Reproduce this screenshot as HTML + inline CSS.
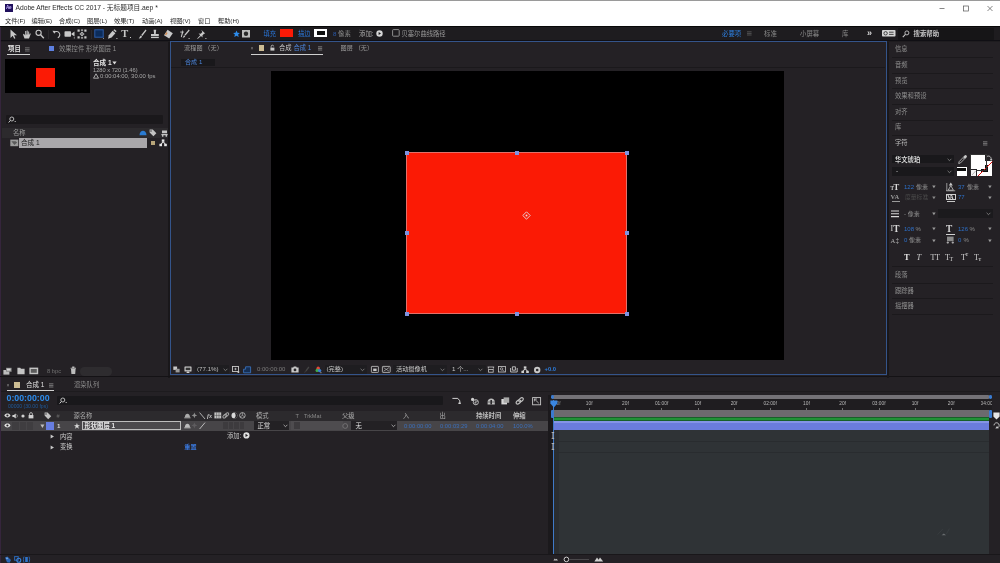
<!DOCTYPE html>
<html lang="zh-CN"><head><meta charset="utf-8"><title>Adobe After Effects CC 2017 - 无标题项目.aep *</title>
<style>
html,body{margin:0;padding:0;}
body{width:1000px;height:563px;overflow:hidden;position:relative;background:#242125;font-family:"Liberation Sans","Noto Sans CJK SC",sans-serif;-webkit-font-smoothing:antialiased;}
#app{position:absolute;left:-20px;top:-20px;width:1040px;height:603px;overflow:hidden;background:#242125;filter:blur(0.5px);}
#in{position:absolute;left:20px;top:20px;width:1000px;height:563px;}
.a{position:absolute;display:block;}
.t{position:absolute;display:block;white-space:nowrap;line-height:10px;height:10px;}
svg{overflow:visible;}
</style></head>
<body>
<div id="app"><div id="in">
<div class="a" style="left:-20px;top:-20px;width:1040px;height:46.5px;background:#ffffff;"></div>
<div class="a" style="left:-20px;top:-20px;width:1040px;height:20.8px;background:#9a9a9a;"></div>
<div class="a" style="left:5px;top:4px;width:7.5px;height:7.5px;background:#1f0f5c;"></div>
<span class="t" style="left:5.9px;top:2.9px;font-size:4.6px;color:#c9b8ff;font-weight:bold;letter-spacing:-0.2px">Ae</span>
<span class="t" style="left:15.5px;top:3.2px;font-size:6.7px;color:#2a2a2a;">Adobe After Effects CC 2017 - 无标题项目.aep *</span>
<svg class="a" style="left:938px;top:4px;" width="60" height="9" viewBox="0 0 60 9"><path d="M1.5 4.5h5" stroke="#555" stroke-width="0.7" fill="none"/><rect x="25.5" y="2" width="5" height="5" stroke="#555" stroke-width="0.7" fill="none"/><path d="M49.5 2l5 5M54.5 2l-5 5" stroke="#555" stroke-width="0.7" fill="none"/></svg>
<span class="t" style="left:5px;top:16px;font-size:6.2px;color:#2a2a2a;">文件(F)</span>
<span class="t" style="left:31.5px;top:16px;font-size:6.2px;color:#2a2a2a;">编辑(E)</span>
<span class="t" style="left:59px;top:16px;font-size:6.2px;color:#2a2a2a;">合成(C)</span>
<span class="t" style="left:87px;top:16px;font-size:6.2px;color:#2a2a2a;">图层(L)</span>
<span class="t" style="left:114px;top:16px;font-size:6.2px;color:#2a2a2a;">效果(T)</span>
<span class="t" style="left:142px;top:16px;font-size:6.2px;color:#2a2a2a;">动画(A)</span>
<span class="t" style="left:170px;top:16px;font-size:6.2px;color:#2a2a2a;">视图(V)</span>
<span class="t" style="left:198px;top:16px;font-size:6.2px;color:#2a2a2a;">窗口</span>
<span class="t" style="left:218px;top:16px;font-size:6.2px;color:#2a2a2a;">帮助(H)</span>
<div class="a" style="left:-20px;top:26.5px;width:1040px;height:15px;background:#1e1c1f;"></div>
<div class="a" style="left:-20px;top:26.4px;width:1040px;height:1px;background:#080808;"></div>
<div class="a" style="left:-20px;top:39.8px;width:1040px;height:1.2px;background:#100f14;"></div>
<svg class="a" style="left:9px;top:28.5px;" width="9" height="11" viewBox="0 0 9 11"><path d="M1.5 0.5v8.5l2.2-2.2 1.5 3 1.2-0.6-1.4-2.9h3z" fill="#c8c8c8"/></svg>
<svg class="a" style="left:20.5px;top:28.5px;" width="11" height="11" viewBox="0 0 11 11"><path d="M2 5.5l1.5 4h4.5l1.8-4.8-0.9-0.4-0.8 1.7v-3.6h-0.9v3h-0.5v-4h-1v4h-0.5v-3.4h-1v4.6l-1.3-1.8z" fill="#c8c8c8"/></svg>
<svg class="a" style="left:34.5px;top:28.5px;" width="10" height="11" viewBox="0 0 10 11"><circle cx="3.6" cy="3.8" r="2.6" stroke="#c8c8c8" stroke-width="1.1" fill="none"/><path d="M5.6 5.8l3.2 3.4" stroke="#c8c8c8" stroke-width="1.4"/></svg>
<svg class="a" style="left:51.5px;top:28.5px;" width="10" height="11" viewBox="0 0 10 11"><path d="M2.2 3.4a3.3 3.3 0 1 1 3.6 5.4" stroke="#c8c8c8" stroke-width="1.1" fill="none"/><path d="M0.5 1.8l3.2 0.2-1.4 2.8z" fill="#c8c8c8"/></svg>
<svg class="a" style="left:63.5px;top:29.5px;" width="12" height="9" viewBox="0 0 12 9"><rect x="0.5" y="1.2" width="6.5" height="5.6" rx="0.8" fill="#c8c8c8"/><path d="M7 4l3.5-2.5v5z" fill="#c8c8c8"/><rect x="9.8" y="7.4" width="1" height="1" fill="#c8c8c8"/></svg>
<svg class="a" style="left:77px;top:29px;" width="10" height="10" viewBox="0 0 10 10"><g fill="#c8c8c8"><rect x="0.5" y="0.5" width="2.2" height="2.2"/><rect x="3.9" y="0.5" width="2.2" height="1.2"/><rect x="7.3" y="0.5" width="2.2" height="2.2"/><rect x="0.5" y="7.3" width="2.2" height="2.2"/><rect x="7.3" y="7.3" width="2.2" height="2.2"/><rect x="3.9" y="8.3" width="2.2" height="1.2"/><path d="M5 2.6l1.5 1.6h-1v1.6h1l-1.5 1.6-1.5-1.6h1v-1.6h-1z"/><path d="M2.4 5l1.4-1.3v2.6zM7.6 5l-1.4-1.3v2.6z"/></g></svg>
<svg class="a" style="left:93.5px;top:28.5px;" width="11" height="11" viewBox="0 0 11 11"><rect x="0.8" y="0.8" width="8.4" height="7.4" fill="#0c2c5a" stroke="#2b5ca8" stroke-width="1"/><rect x="9" y="9" width="1" height="1" fill="#8a8a8a"/></svg>
<svg class="a" style="left:106.5px;top:28.5px;" width="11" height="11" viewBox="0 0 11 11"><path d="M1 9.8l0.8-3.6 3.8-4.4 2.8 2.4-3.8 4.4z" fill="#c8c8c8"/><path d="M6.4 1.2l1-1 2.2 1.9-0.9 1.1z" fill="#c8c8c8"/><rect x="9.4" y="9" width="1" height="1" fill="#c8c8c8"/></svg>
<span class="t" style="left:121.3px;top:28.8px;font-size:10.5px;color:#c8c8c8;font-family:'Liberation Serif',serif;font-weight:bold;">T</span>
<div class="a" style="left:130px;top:37.3px;width:1px;height:1px;background:#c8c8c8;"></div>
<svg class="a" style="left:137.5px;top:28.5px;" width="9" height="11" viewBox="0 0 9 11"><path d="M7.6 0.6l0.9 0.8-4.2 5.6-1.1-0.9z" fill="#c8c8c8"/><path d="M2.9 6.6l1.1 0.9c-0.3 1.4-1.5 2-3.2 1.9 0.9-0.6 0.9-2 2.1-2.8z" fill="#c8c8c8"/></svg>
<svg class="a" style="left:149.5px;top:28.5px;" width="10" height="11" viewBox="0 0 10 11"><path d="M3.6 0.8h2.6l-0.5 4.2h3.1v2.2h-7.8v-2.2h3.1z" fill="#c8c8c8"/><rect x="1" y="8" width="7.8" height="1.1" fill="#c8c8c8"/></svg>
<svg class="a" style="left:162.5px;top:28.5px;" width="11" height="11" viewBox="0 0 11 11"><path d="M4.6 0.8l5.2 3.4-3.6 5.4-5.2-3.4z" fill="#c8c8c8"/><path d="M1.9 5.4l1.5-2.3 1.2 0.8-1.5 2.3z" fill="#d08a50"/></svg>
<svg class="a" style="left:179.5px;top:28.5px;" width="11" height="11" viewBox="0 0 11 11"><path d="M8.8 0.6l0.9 0.8-4.2 5.2-1.1-0.9z" fill="#c8c8c8"/><path d="M4.1 6.2l1.1 0.9c-0.3 1.2-1.2 1.8-2.6 1.7 0.6-0.6 0.6-1.8 1.5-2.6z" fill="#c8c8c8"/><path d="M2.2 0.6l0.9 3.2-1.4 4.4-0.9-0.2 1-4.2z" fill="#c8c8c8"/><rect x="0.2" y="2.6" width="3.6" height="0.9" fill="#c8c8c8"/><rect x="8.6" y="9" width="1" height="1" fill="#c8c8c8"/></svg>
<svg class="a" style="left:195.5px;top:28.5px;" width="11" height="11" viewBox="0 0 11 11"><path d="M5.2 0.8l4 3.6-1.2 0.4-1.6 1.6 0.2 2-1.6-1.4-3.4 3-0.4-0.4 3-3.4-1.6-1.6 2.2 0.1 1.6-1.6z" fill="#c8c8c8"/><rect x="9.4" y="9" width="1" height="1" fill="#c8c8c8"/></svg>
<div class="a" style="left:48px;top:29.5px;width:0.6px;height:9px;background:#2c2a2d;"></div>
<div class="a" style="left:90.5px;top:29.5px;width:0.6px;height:9px;background:#2c2a2d;"></div>
<svg class="a" style="left:232.5px;top:29.5px;" width="7" height="8" viewBox="0 0 7 8"><path d="M3.5 0.4l1 2.3 2.4 0.2-1.8 1.7 0.6 2.5-2.2-1.4-2.2 1.4 0.6-2.5-1.8-1.7 2.4-0.2z" fill="#2d8ceb"/></svg>
<svg class="a" style="left:242px;top:29.8px;" width="8" height="7.5" viewBox="0 0 8 7.5"><rect x="0" y="0" width="8" height="7.5" fill="#bdbdbd"/><circle cx="4" cy="3.75" r="2.2" fill="#2a2a2a"/></svg>
<span class="t" style="left:263.5px;top:28.5px;font-size:6.3px;color:#2a74d4;">填充</span>
<div class="a" style="left:279.5px;top:28.8px;width:13px;height:8.7px;background:#fc1a06;"></div>
<span class="t" style="left:298px;top:28.5px;font-size:6.3px;color:#2a74d4;">描边</span>
<div class="a" style="left:314px;top:28.8px;width:13.2px;height:8.7px;background:#ffffff;"></div>
<div class="a" style="left:316.6px;top:31.2px;width:8px;height:3.8px;background:#111;"></div>
<span class="t" style="left:333px;top:28.5px;font-size:6.2px;color:#2a5cae;">8</span>
<span class="t" style="left:338px;top:28.5px;font-size:6.4px;color:#8c8c8c;">像素</span>
<span class="t" style="left:359px;top:28.5px;font-size:6.4px;color:#a8a8a8;">添加:</span>
<svg class="a" style="left:375.5px;top:30px;" width="7" height="7" viewBox="0 0 7 7"><circle cx="3.5" cy="3.5" r="3.2" fill="#d6d6d6"/><path d="M2.6 1.9l2.4 1.6-2.4 1.6z" fill="#1d1b1e"/></svg>
<svg class="a" style="left:391.5px;top:29.3px;" width="8" height="8" viewBox="0 0 8 8"><rect x="0.6" y="0.6" width="6.6" height="6.6" rx="0.8" fill="none" stroke="#9a9a9a" stroke-width="0.9"/></svg>
<span class="t" style="left:401.5px;top:28.5px;font-size:6.3px;color:#9a9a9a;">贝塞尔曲线路径</span>
<span class="t" style="left:722px;top:28.8px;font-size:6.4px;color:#2d7fe0;">必要项</span>
<svg class="a" style="left:746.5px;top:31.3px;" width="5" height="5" viewBox="0 0 5 5"><path d="M0 0.8h4.6M0 2.4h4.6M0 4h4.6" stroke="#666" stroke-width="0.7"/></svg>
<span class="t" style="left:764px;top:28.8px;font-size:6.4px;color:#8a8a8a;">标准</span>
<span class="t" style="left:800px;top:28.8px;font-size:6.4px;color:#8a8a8a;">小屏幕</span>
<span class="t" style="left:842px;top:28.8px;font-size:6.4px;color:#8a8a8a;">库</span>
<span class="t" style="left:867px;top:27.8px;font-size:9px;color:#d8d8d8;font-weight:bold">»</span>
<svg class="a" style="left:882px;top:30.3px;" width="14" height="7" viewBox="0 0 14 7"><rect x="0" y="0" width="13.5" height="6.6" rx="0.8" fill="#d4d4d4"/><circle cx="3.6" cy="3.3" r="1.7" fill="none" stroke="#222" stroke-width="0.8"/><path d="M7 2.2h4.6M7 4.4h4.6" stroke="#222" stroke-width="0.8"/></svg>
<div class="a" style="left:898px;top:28px;width:96px;height:11.5px;background:#161517;border-radius:1px"></div>
<svg class="a" style="left:901.5px;top:30px;" width="8" height="8" viewBox="0 0 8 8"><circle cx="4.9" cy="2.9" r="2" fill="none" stroke="#c8c8c8" stroke-width="0.9"/><path d="M3.4 4.4l-2.6 2.8" stroke="#c8c8c8" stroke-width="1.1"/></svg>
<span class="t" style="left:913.5px;top:28.8px;font-size:6.4px;color:#c4c4c4;font-weight:bold">搜索帮助</span>
<div class="a" style="left:-20px;top:26.5px;width:21.2px;height:557px;background:#35253c;"></div>
<span class="t" style="left:8px;top:43.6px;font-size:6.4px;color:#e0e0e0;font-weight:bold">项目</span>
<svg class="a" style="left:25px;top:46.8px;" width="5" height="5" viewBox="0 0 5 5"><path d="M0 0.8h4.6M0 2.4h4.6M0 4h4.6" stroke="#8a8a8a" stroke-width="0.7"/></svg>
<div class="a" style="left:7px;top:54.4px;width:23px;height:1px;background:#d0d0d0;"></div>
<div class="a" style="left:48.5px;top:45.8px;width:5px;height:5.6px;background:#5d80e0;"></div>
<span class="t" style="left:59px;top:43.8px;font-size:6.3px;color:#8e8e8e;">效果控件 形状图层 1</span>
<div class="a" style="left:4.6px;top:59.2px;width:85px;height:33.6px;background:#000;"></div>
<div class="a" style="left:36px;top:68.4px;width:18.5px;height:18.8px;background:#fb1a05;"></div>
<span class="t" style="left:93px;top:57.6px;font-size:6.6px;color:#e6e6e6;font-weight:bold">合成 1</span>
<svg class="a" style="left:111.5px;top:61px;" width="5" height="4" viewBox="0 0 5 4"><path d="M0.4 0.6h4.2l-2.1 2.8z" fill="#dcdcdc"/></svg>
<span class="t" style="left:93px;top:64.6px;font-size:5.7px;color:#a8a8a8;">1280 x 720 (1.46)</span>
<svg class="a" style="left:93px;top:73.3px;" width="6" height="6" viewBox="0 0 6 6"><path d="M3 0.8l2.5 4.4h-5z" fill="none" stroke="#c8c8c8" stroke-width="0.8"/></svg>
<span class="t" style="left:100px;top:71.4px;font-size:5.9px;color:#a8a8a8;">0:00:04:00, 30.00 fps</span>
<div class="a" style="left:5.5px;top:115.3px;width:157.5px;height:8.5px;background:#1a181b;border-radius:1px"></div>
<svg class="a" style="left:7.5px;top:116px;" width="10" height="8" viewBox="0 0 10 8"><circle cx="3.8" cy="3" r="2" fill="none" stroke="#c8c8c8" stroke-width="0.9"/><path d="M2.4 4.5l-1.8 2" stroke="#c8c8c8" stroke-width="1"/><rect x="6.6" y="5" width="1.2" height="0.9" fill="#c8c8c8"/></svg>
<div class="a" style="left:2px;top:128px;width:166px;height:9.6px;background:#2c2a2d;"></div>
<span class="t" style="left:13px;top:128px;font-size:6.3px;color:#a0a0a0;">名称</span>
<svg class="a" style="left:138.5px;top:129.5px;" width="8" height="6" viewBox="0 0 8 6"><path d="M0.5 5.2c0-3 2-4.4 3.5-4.4s3.5 1.4 3.5 4.4z" fill="#2a7bd2"/></svg>
<svg class="a" style="left:149px;top:128.8px;" width="8" height="8" viewBox="0 0 8 8"><path d="M0.6 0.6h3.2l3.6 3.6-3 3-3.8-3.8z" fill="#c4c4c4"/><circle cx="2" cy="2" r="0.7" fill="#2c2a2d"/></svg>
<svg class="a" style="left:160.5px;top:129.5px;" width="7" height="7" viewBox="0 0 7 7"><path d="M1 0.6h5v2.6h-5zM0.4 4h6.2v1.2h-6.2zM1 5.2h1.4v1.6h-1.4zM4.6 5.2h1.4v1.6h-1.4z" fill="#c4c4c4"/></svg>
<svg class="a" style="left:9.5px;top:138.8px;" width="9" height="8" viewBox="0 0 9 8"><rect x="0.3" y="0.6" width="8" height="6.6" fill="#9c9c9c"/><path d="M1.4 2.2h4.2l1.6 1.2-2.8 2.6z" fill="#5a5a5a"/></svg>
<div class="a" style="left:19px;top:138.2px;width:128px;height:9.4px;background:#a9a7aa;"></div>
<span class="t" style="left:21px;top:138px;font-size:6.6px;color:#1a1a1a;">合成 1</span>
<div class="a" style="left:150.8px;top:140.6px;width:4.6px;height:4.8px;background:#b8a67a;"></div>
<svg class="a" style="left:158.5px;top:138.8px;" width="9" height="8" viewBox="0 0 9 8"><g fill="#e8e8e8"><rect x="2.8" y="0.4" width="2.6" height="2.4"/><rect x="0.4" y="4.8" width="2.6" height="2.4"/><rect x="5.2" y="4.8" width="2.6" height="2.4"/><path d="M3.8 2.6l-2.4 2.6h1.2l1.6-1.6 1.6 1.6h1.2l-2.4-2.6z"/></g></svg>
<svg class="a" style="left:3px;top:366.5px;" width="9" height="9" viewBox="0 0 9 9"><rect x="0.4" y="3" width="6" height="4.6" fill="#bdbdbd"/><rect x="3" y="0.8" width="5.6" height="4" fill="#8c8c8c"/><rect x="4" y="1.6" width="3.6" height="2" fill="#d8d8d8"/></svg>
<svg class="a" style="left:16.5px;top:366.8px;" width="8" height="8" viewBox="0 0 8 8"><path d="M0.4 0.8h2.8l0.8 1h3.6v5.4h-7.2z" fill="#c4c4c4"/></svg>
<svg class="a" style="left:29px;top:366.8px;" width="10" height="8" viewBox="0 0 10 8"><rect x="0.4" y="0.6" width="8.8" height="6.6" fill="#c4c4c4"/><rect x="1.8" y="2" width="6" height="3.8" fill="#5c5c5c"/></svg>
<span class="t" style="left:47px;top:366.3px;font-size:5.8px;color:#6f6f6f;">8 bpc</span>
<svg class="a" style="left:69.5px;top:366.3px;" width="7" height="9" viewBox="0 0 7 9"><path d="M0.6 1.8h5.4v0.9h-5.4zM2.2 0.6h2.2v1.2h-2.2zM1 3.1h4.6l-0.4 5h-3.8z" fill="#bcbcbc"/></svg>
<div class="a" style="left:80px;top:367px;width:31.5px;height:8.5px;background:#2e2c2f;border-radius:4.2px"></div>
<div class="a" style="left:168px;top:42px;width:2px;height:336px;background:#19171a;"></div>
<div class="a" style="left:0px;top:376.3px;width:1000px;height:1.2px;background:#141215;"></div>
<div class="a" style="left:886.6px;top:42px;width:2.2px;height:336px;background:#19171a;"></div>
<div class="a" style="left:169.5px;top:41.4px;width:715.2px;height:331.7px;border:1.3px solid #34548a;"></div>
<span class="t" style="left:184px;top:43.2px;font-size:6.1px;color:#9a9a9a;letter-spacing:0.1px">流程图 （无）</span>
<span class="t" style="left:250.5px;top:43.2px;font-size:5px;color:#8a8a8a;">×</span>
<div class="a" style="left:259px;top:45.4px;width:5.2px;height:5.4px;background:#cdbd94;"></div>
<svg class="a" style="left:269.5px;top:45px;" width="5" height="6" viewBox="0 0 5 6"><rect x="0.4" y="2.6" width="4" height="3" fill="#c8c8c8"/><path d="M1.2 2.6v-1.2a1.2 1.2 0 0 1 2.4 0" fill="none" stroke="#c8c8c8" stroke-width="0.8"/></svg>
<span class="t" style="left:279px;top:43.2px;font-size:6.3px;color:#c8c8c8;">合成</span>
<span class="t" style="left:293.5px;top:43.2px;font-size:6.3px;color:#4d86dc;">合成 1</span>
<svg class="a" style="left:317.5px;top:46.2px;" width="5" height="5" viewBox="0 0 5 5"><path d="M0 0.8h4.2M0 2.4h4.2M0 4h4.2" stroke="#9a9a9a" stroke-width="0.7"/></svg>
<div class="a" style="left:251px;top:54.2px;width:72px;height:1px;background:#d0d0d0;"></div>
<span class="t" style="left:340.5px;top:43.2px;font-size:6.1px;color:#9a9a9a;letter-spacing:0.1px">图层 （无）</span>
<div class="a" style="left:181px;top:58.6px;width:34px;height:7.6px;background:#19181b;"></div>
<span class="t" style="left:185px;top:57.4px;font-size:6.1px;color:#4d86dc;">合成 1</span>
<div class="a" style="left:171px;top:67.2px;width:714px;height:0.8px;background:#1b191c;"></div>
<div class="a" style="left:271px;top:70.7px;width:513px;height:289px;background:#000;"></div>
<div class="a" style="left:406.3px;top:152.3px;width:221.2px;height:162px;background:#fb1a05;"></div>
<div class="a" style="left:406.3px;top:152.3px;width:221.2px;height:162px;border:1px solid #e2706a;box-sizing:border-box;"></div>
<div class="a" style="left:404.6px;top:151px;width:4px;height:4px;background:#7d92e0;"></div>
<div class="a" style="left:404.6px;top:231.3px;width:4px;height:4px;background:#7d92e0;"></div>
<div class="a" style="left:404.6px;top:311.8px;width:4px;height:4px;background:#7d92e0;"></div>
<div class="a" style="left:514.8px;top:151px;width:4px;height:4px;background:#7d92e0;"></div>
<div class="a" style="left:514.8px;top:311.8px;width:4px;height:4px;background:#7d92e0;"></div>
<div class="a" style="left:625px;top:151px;width:4px;height:4px;background:#7d92e0;"></div>
<div class="a" style="left:625px;top:231.3px;width:4px;height:4px;background:#7d92e0;"></div>
<div class="a" style="left:625px;top:311.8px;width:4px;height:4px;background:#7d92e0;"></div>
<svg class="a" style="left:522.4px;top:211.3px;" width="9" height="9" viewBox="0 0 9 9"><path d="M4.5 0.8l3.7 3.7-3.7 3.7-3.7-3.7z" fill="none" stroke="#e8c4cc" stroke-width="1"/><circle cx="4.5" cy="4.5" r="1" fill="#f0d8dc"/></svg>
<svg class="a" style="left:173px;top:366px;" width="7" height="7" viewBox="0 0 7 7"><rect x="0.3" y="0.5" width="3.8" height="3.4" fill="#c8c8c8"/><rect x="2.6" y="2.8" width="4" height="3.6" fill="#9a9a9a"/></svg>
<svg class="a" style="left:184px;top:365.8px;" width="8" height="8" viewBox="0 0 8 8"><rect x="0.5" y="0.6" width="7" height="4.8" rx="0.5" fill="#d0d0d0"/><rect x="1.6" y="1.6" width="4.8" height="2.6" fill="#333"/><rect x="2.6" y="6" width="2.8" height="1" fill="#d0d0d0"/><rect x="3.5" y="5.2" width="1" height="1" fill="#d0d0d0"/></svg>
<div class="a" style="left:195px;top:364.6px;width:34px;height:9px;background:#1e1d20;border-radius:1px"></div>
<div class="a" style="left:325px;top:364.6px;width:42px;height:9px;background:#1e1d20;border-radius:1px"></div>
<div class="a" style="left:393px;top:364.6px;width:54px;height:9px;background:#1e1d20;border-radius:1px"></div>
<div class="a" style="left:449.5px;top:364.6px;width:36px;height:9px;background:#1e1d20;border-radius:1px"></div>
<span class="t" style="left:197px;top:364.2px;font-size:6.2px;color:#bdbdbd;">(77.1%)</span>
<svg class="a" style="left:222.5px;top:367.8px;" width="5" height="4" viewBox="0 0 5 4"><path d="M0.6 0.8l1.9 1.9 1.9-1.9" fill="none" stroke="#8a8a8a" stroke-width="0.8"/></svg>
<svg class="a" style="left:232px;top:365.5px;" width="8" height="8" viewBox="0 0 8 8"><rect x="0.5" y="0.5" width="6" height="5" fill="none" stroke="#c8c8c8" stroke-width="0.9"/><path d="M3.5 1.8v2.4M2.3 3h2.4" stroke="#c8c8c8" stroke-width="0.7"/><rect x="5.6" y="5" width="1.6" height="2" fill="#c8c8c8"/></svg>
<svg class="a" style="left:243px;top:365.5px;" width="9" height="8" viewBox="0 0 9 8"><path d="M0.6 6.8v-3.6h2v-2.4h5v6z" fill="#152f55" stroke="#3c78c8" stroke-width="0.8"/></svg>
<span class="t" style="left:257px;top:364.2px;font-size:6px;color:#7c7c7c;">0:00:00:00</span>
<svg class="a" style="left:291px;top:366px;" width="8" height="7" viewBox="0 0 8 7"><path d="M0.4 1.6h1.8l0.6-1h2.4l0.6 1h1.8v4.8h-7.2z" fill="#c8c8c8"/><circle cx="4" cy="3.9" r="1.4" fill="#2a282b"/></svg>
<svg class="a" style="left:303px;top:366px;" width="7" height="7" viewBox="0 0 7 7"><path d="M5.4 0.6l1 0.8-3 4-1-0.8z" fill="#444"/><path d="M2 5l1 0.8-1.8 1.2z" fill="#444"/></svg>
<svg class="a" style="left:315px;top:365.5px;" width="8" height="8" viewBox="0 0 8 8"><circle cx="3.2" cy="2.3" r="1.7" fill="#e04a3a"/><circle cx="2.2" cy="4.4" r="1.7" fill="#3fae49"/><circle cx="4.6" cy="4.6" r="1.7" fill="#3b7fd6"/><rect x="5.4" y="6.2" width="1" height="1" fill="#bbb"/></svg>
<span class="t" style="left:326.5px;top:364.2px;font-size:6.2px;color:#c0c0c0;">(完整)</span>
<svg class="a" style="left:360px;top:367.8px;" width="5" height="4" viewBox="0 0 5 4"><path d="M0.6 0.8l1.9 1.9 1.9-1.9" fill="none" stroke="#8a8a8a" stroke-width="0.8"/></svg>
<svg class="a" style="left:371px;top:365.8px;" width="8" height="7" viewBox="0 0 8 7"><rect x="0.4" y="0.4" width="7" height="6" rx="0.6" fill="none" stroke="#c8c8c8" stroke-width="0.8"/><rect x="2.2" y="2.6" width="3.4" height="2.4" fill="#c8c8c8"/></svg>
<svg class="a" style="left:382px;top:365.8px;" width="9" height="7" viewBox="0 0 9 7"><rect x="0.4" y="0.4" width="7.8" height="6" rx="0.6" fill="none" stroke="#c8c8c8" stroke-width="0.8"/><path d="M1.6 1.6l5.4 3.6M7 1.6l-5.4 3.6" stroke="#c8c8c8" stroke-width="0.6"/></svg>
<span class="t" style="left:396px;top:364.2px;font-size:6.2px;color:#c8c8c8;">活动摄像机</span>
<svg class="a" style="left:439.5px;top:367.8px;" width="5" height="4" viewBox="0 0 5 4"><path d="M0.6 0.8l1.9 1.9 1.9-1.9" fill="none" stroke="#8a8a8a" stroke-width="0.8"/></svg>
<span class="t" style="left:452px;top:364.2px;font-size:6.2px;color:#c8c8c8;">1 个...</span>
<svg class="a" style="left:477.5px;top:367.8px;" width="5" height="4" viewBox="0 0 5 4"><path d="M0.6 0.8l1.9 1.9 1.9-1.9" fill="none" stroke="#8a8a8a" stroke-width="0.8"/></svg>
<svg class="a" style="left:486.5px;top:365.8px;" width="8" height="7" viewBox="0 0 8 7"><path d="M0.6 1h6.6M1.4 1v1.6M6.4 1v1.6" stroke="#c8c8c8" stroke-width="0.8" fill="none"/><rect x="1.6" y="3.4" width="4.6" height="2.8" fill="none" stroke="#c8c8c8" stroke-width="0.8"/></svg>
<svg class="a" style="left:498px;top:365.8px;" width="8" height="7" viewBox="0 0 8 7"><rect x="0.4" y="0.4" width="7" height="5.6" fill="none" stroke="#c8c8c8" stroke-width="0.8"/><circle cx="3.6" cy="2.9" r="1.2" fill="none" stroke="#c8c8c8" stroke-width="0.7"/><path d="M4.6 3.9l1.6 1.6" stroke="#c8c8c8" stroke-width="0.7"/></svg>
<svg class="a" style="left:509.5px;top:365.8px;" width="8" height="7" viewBox="0 0 8 7"><path d="M0.6 2v4h6.6v-4M2.4 0.8h3v3.4h-3z" fill="none" stroke="#c8c8c8" stroke-width="0.9"/></svg>
<svg class="a" style="left:521px;top:365.5px;" width="9" height="8" viewBox="0 0 9 8"><g fill="#d0d0d0"><rect x="2.8" y="0.4" width="2.6" height="2.2"/><rect x="0.4" y="4.8" width="2.6" height="2.2"/><rect x="5.2" y="4.8" width="2.6" height="2.2"/><path d="M3.8 2.4l-2.4 2.6h1.2l1.6-1.6 1.6 1.6h1.2l-2.4-2.6z"/></g></svg>
<svg class="a" style="left:533px;top:365.5px;" width="9" height="8" viewBox="0 0 9 8"><circle cx="4.2" cy="4" r="3.2" fill="#c8c8c8"/><circle cx="4.2" cy="4" r="1.3" fill="#2a282b"/></svg>
<span class="t" style="left:544.6px;top:364.2px;font-size:5.8px;color:#2d7fe0;font-weight:bold">+0.0</span>
<span class="t" style="left:895px;top:44.4px;font-size:6.3px;color:#8f8f8f;">信息</span>
<div class="a" style="left:892px;top:57.199999999999996px;width:101px;height:0.7px;background:#1b191c;"></div>
<span class="t" style="left:895px;top:60px;font-size:6.3px;color:#8f8f8f;">音频</span>
<div class="a" style="left:892px;top:72.8px;width:101px;height:0.7px;background:#1b191c;"></div>
<span class="t" style="left:895px;top:75.6px;font-size:6.3px;color:#8f8f8f;">预览</span>
<div class="a" style="left:892px;top:88.39999999999999px;width:101px;height:0.7px;background:#1b191c;"></div>
<span class="t" style="left:895px;top:91.2px;font-size:6.3px;color:#8f8f8f;">效果和预设</span>
<div class="a" style="left:892px;top:104.0px;width:101px;height:0.7px;background:#1b191c;"></div>
<span class="t" style="left:895px;top:106.8px;font-size:6.3px;color:#8f8f8f;">对齐</span>
<div class="a" style="left:892px;top:119.6px;width:101px;height:0.7px;background:#1b191c;"></div>
<span class="t" style="left:895px;top:122.4px;font-size:6.3px;color:#8f8f8f;">库</span>
<div class="a" style="left:892px;top:135.20000000000002px;width:101px;height:0.7px;background:#1b191c;"></div>
<span class="t" style="left:895px;top:138.2px;font-size:6.3px;color:#bdbdbd;">字符</span>
<svg class="a" style="left:983px;top:141px;" width="5" height="5" viewBox="0 0 5 5"><path d="M0 0.8h4.4M0 2.4h4.4M0 4h4.4" stroke="#9a9a9a" stroke-width="0.7"/></svg>
<div class="a" style="left:892px;top:155px;width:61.5px;height:8.2px;background:#19181b;"></div>
<span class="t" style="left:895px;top:154.5px;font-size:6.3px;color:#d8d8d8;font-weight:bold">华文琥珀</span>
<svg class="a" style="left:947px;top:157.6px;" width="5" height="4" viewBox="0 0 5 4"><path d="M0.6 0.8l1.9 1.9 1.9-1.9" fill="none" stroke="#8a8a8a" stroke-width="0.8"/></svg>
<div class="a" style="left:892px;top:167.4px;width:61.5px;height:8.2px;background:#19181b;"></div>
<span class="t" style="left:896px;top:166.4px;font-size:6.3px;color:#c8c8c8;">-</span>
<svg class="a" style="left:947px;top:170px;" width="5" height="4" viewBox="0 0 5 4"><path d="M0.6 0.8l1.9 1.9 1.9-1.9" fill="none" stroke="#8a8a8a" stroke-width="0.8"/></svg>
<svg class="a" style="left:957.5px;top:155px;" width="9" height="9" viewBox="0 0 9 9"><path d="M6.6 0.5a1.3 1.3 0 0 1 1.9 1.9l-1.5 1.5-1.9-1.9z" fill="#c8c8c8"/><path d="M5 2.6l1.4 1.4-4 4-1.7 0.5 0.4-1.8z" fill="none" stroke="#c8c8c8" stroke-width="0.8"/></svg>
<div class="a" style="left:977px;top:161px;width:15.4px;height:15.2px;background:#ffffff;"></div>
<div class="a" style="left:981.2px;top:165px;width:6.6px;height:7px;background:#111;"></div>
<svg class="a" style="left:977px;top:161px;" width="16" height="16" viewBox="0 0 16 16"><path d="M1 15l14.4-14.4" stroke="#e01010" stroke-width="1"/></svg>
<div class="a" style="left:970.2px;top:154.4px;width:15px;height:14.4px;background:#ffffff;"></div>
<div class="a" style="left:969.8px;top:154px;width:15.2px;height:14.8px;border:0.6px solid #333;"></div>
<svg class="a" style="left:986px;top:155px;" width="7" height="7" viewBox="0 0 7 7"><path d="M1 1.4c2.4-1 4.4 0.4 4.2 3.4" fill="none" stroke="#c8c8c8" stroke-width="0.9"/><path d="M3.8 4.2l1.4 1.8 1.2-2z" fill="#c8c8c8"/></svg>
<div class="a" style="left:956.5px;top:167.4px;width:10.6px;height:8.6px;background:#ffffff;"></div>
<div class="a" style="left:957.4px;top:168.2px;width:8.8px;height:3.2px;background:#0a0a0a;"></div>
<div class="a" style="left:970.8px;top:170.2px;width:5.4px;height:5.8px;background:#f4f4f4;"></div>
<svg class="a" style="left:970.8px;top:170.2px;" width="6" height="6" viewBox="0 0 6 6"><path d="M1 5l3.6-4" stroke="#999" stroke-width="0.7"/></svg>
<span class="t" style="left:890.5px;top:182.8px;font-size:5.2px;color:#d8d8d8;font-family:'Liberation Serif',serif;font-weight:bold;">T</span>
<span class="t" style="left:893.6px;top:181.6px;font-size:8.6px;color:#d8d8d8;font-family:'Liberation Serif',serif;font-weight:bold;">T</span>
<span class="t" style="left:904px;top:182px;font-size:6px;color:#2d6fc8;">122</span>
<span class="t" style="left:916px;top:182px;font-size:6px;color:#8c8c8c;">像素</span>
<svg class="a" style="left:931.5px;top:185.4px;" width="4" height="4" viewBox="0 0 4 4"><path d="M0.2 0.6h3.4l-1.7 2.6z" fill="#9a9a9a"/></svg>
<svg class="a" style="left:945.5px;top:182px;" width="10" height="10" viewBox="0 0 10 10"><path d="M4.8 0.6l2 3h-4z" fill="#c8c8c8"/><path d="M4.8 3.6l2.6 4.6h-5.2z" fill="none" stroke="#c8c8c8" stroke-width="0.8"/><path d="M0.8 1v8M0.2 8.8h9" stroke="#c8c8c8" stroke-width="0.7"/></svg>
<span class="t" style="left:958px;top:182px;font-size:6px;color:#2d6fc8;">37</span>
<span class="t" style="left:967px;top:182px;font-size:6px;color:#8c8c8c;">像素</span>
<svg class="a" style="left:987.5px;top:185.4px;" width="4" height="4" viewBox="0 0 4 4"><path d="M0.2 0.6h3.4l-1.7 2.6z" fill="#9a9a9a"/></svg>
<span class="t" style="left:890.5px;top:191.6px;font-size:6.4px;color:#9a9a9a;font-family:'Liberation Serif',serif;font-weight:bold;letter-spacing:-1px">V</span>
<span class="t" style="left:894.4px;top:192.4px;font-size:6.4px;color:#9a9a9a;font-family:'Liberation Serif',serif;font-weight:bold;">A</span>
<div class="a" style="left:892px;top:200.6px;width:8px;height:0.7px;background:#9a9a9a;"></div>
<span class="t" style="left:905px;top:192.4px;font-size:5.8px;color:#4a4a4a;">度量标准</span>
<svg class="a" style="left:931.5px;top:195.8px;" width="4" height="4" viewBox="0 0 4 4"><path d="M0.2 0.6h3.4l-1.7 2.6z" fill="#8a8a8a"/></svg>
<div class="a" style="left:946.2px;top:193.6px;width:9.6px;height:6.6px;border:0.7px solid #d0d0d0;box-sizing:border-box"></div>
<span class="t" style="left:947.2px;top:192px;font-size:5.2px;color:#e0e0e0;font-family:'Liberation Serif',serif;font-weight:bold;letter-spacing:-0.6px">VA</span>
<div class="a" style="left:946.6px;top:201.4px;width:8.8px;height:0.7px;background:#c8c8c8;"></div>
<span class="t" style="left:958px;top:192px;font-size:6px;color:#2d6fc8;">77</span>
<svg class="a" style="left:987.5px;top:195.8px;" width="4" height="4" viewBox="0 0 4 4"><path d="M0.2 0.6h3.4l-1.7 2.6z" fill="#9a9a9a"/></svg>
<svg class="a" style="left:891px;top:209.8px;" width="9" height="8" viewBox="0 0 9 8"><path d="M0 1h8M0 3.8h8M0 6.6h8" stroke="#d8d8d8" stroke-width="1.1"/></svg>
<span class="t" style="left:904px;top:208.5px;font-size:6px;color:#8c8c8c;">- 像素</span>
<svg class="a" style="left:931.5px;top:212px;" width="4" height="4" viewBox="0 0 4 4"><path d="M0.2 0.6h3.4l-1.7 2.6z" fill="#9a9a9a"/></svg>
<div class="a" style="left:938px;top:209.4px;width:54.5px;height:8.2px;background:#1b1a1d;"></div>
<svg class="a" style="left:986px;top:212px;" width="5" height="4" viewBox="0 0 5 4"><path d="M0.6 0.8l1.9 1.9 1.9-1.9" fill="none" stroke="#8a8a8a" stroke-width="0.8"/></svg>
<span class="t" style="left:890.6px;top:224.2px;font-size:8px;color:#d8d8d8;font-family:'Liberation Serif',serif;font-weight:bold;font-weight:normal">I</span>
<span class="t" style="left:893.2px;top:224.2px;font-size:9.4px;color:#d8d8d8;font-family:'Liberation Serif',serif;font-weight:bold;">T</span>
<span class="t" style="left:904px;top:223.6px;font-size:6px;color:#2d6fc8;">108</span>
<span class="t" style="left:915.6px;top:223.6px;font-size:6px;color:#8c8c8c;">%</span>
<svg class="a" style="left:931.5px;top:227.4px;" width="4" height="4" viewBox="0 0 4 4"><path d="M0.2 0.6h3.4l-1.7 2.6z" fill="#9a9a9a"/></svg>
<span class="t" style="left:946px;top:224.2px;font-size:9.4px;color:#d8d8d8;font-family:'Liberation Serif',serif;font-weight:bold;">T</span>
<div class="a" style="left:946px;top:233.8px;width:8.6px;height:0.8px;background:#d0d0d0;"></div>
<span class="t" style="left:958px;top:223.6px;font-size:6px;color:#2d6fc8;">126</span>
<span class="t" style="left:969.6px;top:223.6px;font-size:6px;color:#8c8c8c;">%</span>
<svg class="a" style="left:987.5px;top:227.4px;" width="4" height="4" viewBox="0 0 4 4"><path d="M0.2 0.6h3.4l-1.7 2.6z" fill="#9a9a9a"/></svg>
<span class="t" style="left:890.5px;top:235.8px;font-size:6.6px;color:#b0b0b0;font-family:'Liberation Serif',serif;font-weight:bold;font-weight:normal">A</span>
<span class="t" style="left:895.6px;top:235.8px;font-size:6.4px;color:#b0b0b0;">‡</span>
<span class="t" style="left:904px;top:235.4px;font-size:6px;color:#2d6fc8;">0</span>
<span class="t" style="left:909px;top:235.4px;font-size:6px;color:#8c8c8c;">像素</span>
<svg class="a" style="left:931.5px;top:239px;" width="4" height="4" viewBox="0 0 4 4"><path d="M0.2 0.6h3.4l-1.7 2.6z" fill="#9a9a9a"/></svg>
<svg class="a" style="left:946px;top:236px;" width="9" height="9" viewBox="0 0 9 9"><rect x="1" y="0.6" width="6.6" height="4.6" fill="#8a8a8a"/><path d="M0.6 6.6h2.4M5.6 6.6h2.4M1.8 5.4v2.4M6.8 5.4v2.4" stroke="#c8c8c8" stroke-width="0.7"/></svg>
<span class="t" style="left:958px;top:235.4px;font-size:6px;color:#2d6fc8;">0</span>
<span class="t" style="left:963.4px;top:235.4px;font-size:6px;color:#8c8c8c;">%</span>
<svg class="a" style="left:987.5px;top:239px;" width="4" height="4" viewBox="0 0 4 4"><path d="M0.2 0.6h3.4l-1.7 2.6z" fill="#9a9a9a"/></svg>
<span class="t" style="left:904px;top:252.6px;font-size:8.4px;color:#e6e6e6;font-family:'Liberation Serif',serif;font-weight:bold;">T</span>
<span class="t" style="left:916.5px;top:252.6px;font-size:8.4px;color:#d0d0d0;font-family:'Liberation Serif',serif;font-weight:bold;font-style:italic;font-weight:normal">T</span>
<span class="t" style="left:930.6px;top:252.6px;font-size:8px;color:#d0d0d0;font-family:'Liberation Serif',serif;font-weight:bold;font-weight:normal;letter-spacing:-0.6px">TT</span>
<span class="t" style="left:945px;top:252.6px;font-size:8px;color:#d0d0d0;font-family:'Liberation Serif',serif;font-weight:bold;font-weight:normal">T</span>
<span class="t" style="left:949.4px;top:253.6px;font-size:6px;color:#d0d0d0;font-family:'Liberation Serif',serif;font-weight:bold;font-weight:normal">T</span>
<span class="t" style="left:961px;top:252.6px;font-size:8px;color:#d0d0d0;font-family:'Liberation Serif',serif;font-weight:bold;font-weight:normal">T</span>
<span class="t" style="left:965.6px;top:250.4px;font-size:4px;color:#d0d0d0;font-family:'Liberation Serif',serif;font-weight:bold;">T</span>
<span class="t" style="left:974px;top:252.6px;font-size:8px;color:#d0d0d0;font-family:'Liberation Serif',serif;font-weight:bold;font-weight:normal">T</span>
<span class="t" style="left:978.6px;top:255px;font-size:4px;color:#d0d0d0;font-family:'Liberation Serif',serif;font-weight:bold;">T</span>
<div class="a" style="left:892px;top:266.2px;width:101px;height:0.7px;background:#1b191c;"></div>
<span class="t" style="left:895px;top:270px;font-size:6.3px;color:#8f8f8f;">段落</span>
<div class="a" style="left:892px;top:282.6px;width:101px;height:0.7px;background:#1b191c;"></div>
<span class="t" style="left:895px;top:285.6px;font-size:6.3px;color:#8f8f8f;">跟踪器</span>
<div class="a" style="left:892px;top:298.20000000000005px;width:101px;height:0.7px;background:#1b191c;"></div>
<span class="t" style="left:895px;top:301.2px;font-size:6.3px;color:#8f8f8f;">摇摆器</span>
<div class="a" style="left:892px;top:313.8px;width:101px;height:0.7px;background:#1b191c;"></div>
<span class="t" style="left:6.5px;top:380px;font-size:5px;color:#8a8a8a;">×</span>
<div class="a" style="left:14.2px;top:382px;width:5.4px;height:5.6px;background:#cdbd94;"></div>
<span class="t" style="left:26px;top:380.2px;font-size:6.5px;color:#e0e0e0;">合成 1</span>
<svg class="a" style="left:49px;top:383.2px;" width="5" height="5" viewBox="0 0 5 5"><path d="M0 0.8h4.4M0 2.4h4.4M0 4h4.4" stroke="#9a9a9a" stroke-width="0.7"/></svg>
<div class="a" style="left:6.5px;top:389.6px;width:47.5px;height:1px;background:#d0d0d0;"></div>
<span class="t" style="left:74px;top:380.2px;font-size:6.3px;color:#8e8e8e;">渲染队列</span>
<span class="t" style="left:6.5px;top:392.6px;font-size:8.8px;color:#2d8ceb;font-weight:bold">0:00:00:00</span>
<span class="t" style="left:8px;top:400.8px;font-size:5.1px;color:#1f5a9c;">00000 (30.00 fps)</span>
<div class="a" style="left:57px;top:396.2px;width:385.5px;height:8.4px;background:#19181b;border-radius:1px"></div>
<div class="a" style="left:1.2px;top:391.4px;width:999px;height:0.8px;background:#1d1b1e;"></div>
<svg class="a" style="left:59px;top:396.6px;" width="10" height="8" viewBox="0 0 10 8"><circle cx="3.8" cy="3" r="2" fill="none" stroke="#c8c8c8" stroke-width="0.9"/><path d="M2.4 4.5l-1.8 2" stroke="#c8c8c8" stroke-width="1"/><rect x="6.6" y="5" width="1.2" height="0.9" fill="#c8c8c8"/></svg>
<svg class="a" style="left:452px;top:397px;" width="10" height="8" viewBox="0 0 10 8"><path d="M0.4 1.4h5.4l2 2.4v2.4" fill="none" stroke="#d0d0d0" stroke-width="1"/><rect x="6.4" y="5.6" width="2.4" height="1.4" fill="#d0d0d0"/></svg>
<svg class="a" style="left:470px;top:396.5px;" width="10" height="9" viewBox="0 0 10 9"><circle cx="2.6" cy="2.4" r="1.6" fill="#d0d0d0"/><circle cx="5.8" cy="5.2" r="2.6" fill="none" stroke="#d0d0d0" stroke-width="0.8"/><path d="M5.8 2.6v5.2M3.6 6.4l4.4-2.4" stroke="#d0d0d0" stroke-width="0.6"/></svg>
<svg class="a" style="left:487px;top:397.5px;" width="9" height="7" viewBox="0 0 9 7"><path d="M0.6 6.4v-2.4c0-2 1.6-3.4 3.6-3.4s3.6 1.4 3.6 3.4v2.4z" fill="#bdbdbd"/><path d="M0.6 4h7.2" stroke="#2a282b" stroke-width="0.6"/><rect x="3.4" y="2" width="1.6" height="4.4" fill="#2a282b"/></svg>
<svg class="a" style="left:501px;top:397px;" width="9" height="8" viewBox="0 0 9 8"><rect x="0.4" y="2" width="5.6" height="5.4" fill="#d8d8d8"/><rect x="2.6" y="0.4" width="5.6" height="5.4" fill="#a8a8a8"/></svg>
<svg class="a" style="left:515px;top:397px;" width="10" height="8" viewBox="0 0 10 8"><ellipse cx="3.4" cy="5" rx="2.6" ry="1.6" transform="rotate(-40 3.4 5)" fill="none" stroke="#bdbdbd" stroke-width="1.1"/><ellipse cx="6" cy="2.8" rx="2.6" ry="1.6" transform="rotate(-40 6 2.8)" fill="none" stroke="#bdbdbd" stroke-width="1.1"/></svg>
<svg class="a" style="left:532px;top:396.6px;" width="10" height="9" viewBox="0 0 10 9"><rect x="0.6" y="0.6" width="8" height="7.2" fill="none" stroke="#c8c8c8" stroke-width="0.9"/><path d="M2.4 2l4.4 4.2M2.4 2v2.4M2.4 2h2.6" stroke="#c8c8c8" stroke-width="0.8" fill="none"/></svg>
<div class="a" style="left:1.2px;top:410.6px;width:548px;height:10px;background:#2c2a2d;"></div>
<div class="a" style="left:1.2px;top:420.6px;width:548px;height:10px;background:#474548;"></div>
<svg class="a" style="left:4px;top:413px;" width="7" height="5" viewBox="0 0 7 5"><path d="M0.3 2.5c1.4-2.6 4.8-2.6 6.2 0c-1.4 2.6-4.8 2.6-6.2 0z" fill="#d8d8d8"/><circle cx="3.4" cy="2.5" r="1.1" fill="#2a282b"/></svg>
<svg class="a" style="left:12px;top:412.6px;" width="6" height="6" viewBox="0 0 6 6"><path d="M0.4 2h1.4l2-1.6v5.2l-2-1.6h-1.4z" fill="#d0d0d0"/><path d="M4.6 1.4c1 1 1 2.2 0 3.2" fill="none" stroke="#d0d0d0" stroke-width="0.6"/></svg>
<svg class="a" style="left:20.5px;top:413.6px;" width="4" height="4" viewBox="0 0 4 4"><circle cx="2" cy="2" r="1.6" fill="#d0d0d0"/></svg>
<svg class="a" style="left:27.5px;top:412px;" width="6" height="7" viewBox="0 0 6 7"><rect x="0.6" y="3" width="4.8" height="3.4" fill="#d0d0d0"/><path d="M1.6 3v-1a1.4 1.4 0 0 1 2.8 0v1" fill="none" stroke="#d0d0d0" stroke-width="0.8"/></svg>
<svg class="a" style="left:43.5px;top:411.6px;" width="8" height="8" viewBox="0 0 8 8"><path d="M0.6 0.6h3l3.6 3.6-3 3-3.6-3.6z" fill="#c4c4c4"/><circle cx="2" cy="2" r="0.7" fill="#2c2a2d"/></svg>
<span class="t" style="left:56.5px;top:410.6px;font-size:5.6px;color:#6a6a6a;">#</span>
<span class="t" style="left:73.5px;top:410.6px;font-size:6.3px;color:#a8a8a8;">源名称</span>
<svg class="a" style="left:183.6px;top:412.6px;" width="7" height="6" viewBox="0 0 7 6"><path d="M0.8 4.6c0-2.6 1.1-3.9 2.6-3.9s2.6 1.3 2.6 3.9z" fill="#ababab"/><rect x="0.2" y="4.4" width="6.4" height="0.9" fill="#ababab"/></svg>
<svg class="a" style="left:191px;top:412px;" width="7" height="7" viewBox="0 0 7 7"><path d="M3.4 0.6l0.8 2 2 0.8-2 0.8-0.8 2-0.8-2-2-0.8 2-0.8z" fill="#8e8e8e"/></svg>
<svg class="a" style="left:199px;top:411.6px;" width="7" height="8" viewBox="0 0 7 8"><path d="M0.6 0.6l5.4 6.4" stroke="#bdbdbd" stroke-width="0.9"/></svg>
<span class="t" style="left:207px;top:410.6px;font-size:6.2px;color:#c8c8c8;font-family:'Liberation Serif',serif;font-style:italic;font-weight:bold;">fx</span>
<svg class="a" style="left:213.5px;top:412px;" width="8" height="7" viewBox="0 0 8 7"><rect x="0.4" y="0.4" width="6.8" height="6" fill="#c4c4c4"/><path d="M0.4 3.4h6.8M2.6 0.4v6M5 0.4v6" stroke="#444" stroke-width="0.5"/></svg>
<svg class="a" style="left:222px;top:412px;" width="8" height="7" viewBox="0 0 8 7"><ellipse cx="2.8" cy="4.2" rx="2.2" ry="1.4" transform="rotate(-40 2.8 4.2)" fill="none" stroke="#a8a8a8" stroke-width="1"/><ellipse cx="4.8" cy="2.6" rx="2.2" ry="1.4" transform="rotate(-40 4.8 2.6)" fill="none" stroke="#a8a8a8" stroke-width="1"/></svg>
<svg class="a" style="left:230.5px;top:412px;" width="7" height="7" viewBox="0 0 7 7"><circle cx="3.4" cy="3.4" r="2.9" fill="#d8d8d8"/><path d="M3.4 0.5a2.9 2.9 0 0 1 0 5.8a4 4 0 0 0 0-5.8z" fill="#2a282b"/></svg>
<svg class="a" style="left:238.5px;top:412px;" width="7" height="7" viewBox="0 0 7 7"><circle cx="3.4" cy="3.4" r="2.8" fill="none" stroke="#bdbdbd" stroke-width="0.8"/><path d="M3.4 0.6v2.8l-2.4 1.6M3.4 3.4l2.4 1.6" stroke="#bdbdbd" stroke-width="0.6" fill="none"/></svg>
<span class="t" style="left:256px;top:410.6px;font-size:6.3px;color:#b0b0b0;">模式</span>
<span class="t" style="left:295.4px;top:410.6px;font-size:5.6px;color:#8a8a8a;">T</span>
<span class="t" style="left:304px;top:410.6px;font-size:5.6px;color:#8a8a8a;">TrkMat</span>
<span class="t" style="left:342px;top:410.6px;font-size:6.3px;color:#b0b0b0;">父级</span>
<span class="t" style="left:403px;top:410.6px;font-size:6.3px;color:#b0b0b0;">入</span>
<span class="t" style="left:439.5px;top:410.6px;font-size:6.3px;color:#b0b0b0;">出</span>
<span class="t" style="left:476px;top:410.6px;font-size:6.3px;color:#c0c0c0;font-weight:bold">持续时间</span>
<span class="t" style="left:513px;top:410.6px;font-size:6.3px;color:#c0c0c0;font-weight:bold">伸缩</span>
<svg class="a" style="left:4px;top:423.2px;" width="7" height="5" viewBox="0 0 7 5"><path d="M0.3 2.5c1.4-2.6 4.8-2.6 6.2 0c-1.4 2.6-4.8 2.6-6.2 0z" fill="#e6e6e6"/><circle cx="3.4" cy="2.5" r="1.1" fill="#2a282b"/></svg>
<div class="a" style="left:12.4px;top:421.6px;width:6.2px;height:8.2px;background:#3f3d40;"></div>
<div class="a" style="left:19.6px;top:421.6px;width:6.2px;height:8.2px;background:#3f3d40;"></div>
<div class="a" style="left:26.8px;top:421.6px;width:6.2px;height:8.2px;background:#3f3d40;"></div>
<svg class="a" style="left:40px;top:423.6px;" width="5" height="5" viewBox="0 0 5 5"><path d="M0.4 0.6h4l-2 3.4z" fill="#bdbdbd"/></svg>
<div class="a" style="left:46px;top:421.6px;width:8.2px;height:8.6px;background:#677de0;"></div>
<span class="t" style="left:57px;top:420.8px;font-size:6.2px;color:#d4d4d4;font-weight:bold">1</span>
<span class="t" style="left:73.8px;top:420.8px;font-size:6.4px;color:#dcdcdc;">★</span>
<div class="a" style="left:82px;top:420.9px;width:98.8px;height:9.6px;border:0.9px solid #bdbdbd;box-sizing:border-box;background:#4b494c"></div>
<span class="t" style="left:84.5px;top:420.8px;font-size:6.3px;color:#e8e8e8;font-weight:bold">形状图层 1</span>
<svg class="a" style="left:183.6px;top:423px;" width="7" height="6" viewBox="0 0 7 6"><path d="M0.8 4.6c0-2.6 1.1-3.9 2.6-3.9s2.6 1.3 2.6 3.9z" fill="#bdbdbd"/><rect x="0.2" y="4.4" width="6.4" height="0.9" fill="#bdbdbd"/></svg>
<svg class="a" style="left:191px;top:422.4px;" width="7" height="7" viewBox="0 0 7 7"><path d="M3.4 0.4l0.9 2.1 2.1 0.9-2.1 0.9-0.9 2.1-0.9-2.1-2.1-0.9 2.1-0.9z" fill="#5e5c5f"/></svg>
<svg class="a" style="left:199px;top:422px;" width="7" height="8" viewBox="0 0 7 8"><path d="M6 0.6l-5.4 6.4" stroke="#c8c8c8" stroke-width="0.9"/></svg>
<div class="a" style="left:223px;top:422.4px;width:4.6px;height:6.6px;background:#3d3b3e;"></div>
<div class="a" style="left:228.6px;top:422.4px;width:4.6px;height:6.6px;background:#3d3b3e;"></div>
<div class="a" style="left:234.2px;top:422.4px;width:4.6px;height:6.6px;background:#3d3b3e;"></div>
<div class="a" style="left:239.8px;top:422.4px;width:4.6px;height:6.6px;background:#3d3b3e;"></div>
<div class="a" style="left:254px;top:421px;width:35.4px;height:9.4px;background:#232124;"></div>
<span class="t" style="left:257.5px;top:420.8px;font-size:6.3px;color:#e0e0e0;">正常</span>
<svg class="a" style="left:283px;top:424.2px;" width="5" height="4" viewBox="0 0 5 4"><path d="M0.6 0.8l1.9 1.9 1.9-1.9" fill="none" stroke="#bdbdbd" stroke-width="0.8"/></svg>
<div class="a" style="left:291px;top:421px;width:52px;height:9.4px;background:#4e4c4f;"></div>
<div class="a" style="left:293.5px;top:422.4px;width:6px;height:6.4px;background:#3d3b3e;"></div>
<svg class="a" style="left:342px;top:422.6px;" width="7" height="6" viewBox="0 0 7 6"><circle cx="3.2" cy="3" r="2.4" fill="none" stroke="#767476" stroke-width="0.9"/></svg>
<div class="a" style="left:351px;top:421px;width:46.4px;height:9.4px;background:#232124;"></div>
<span class="t" style="left:355.5px;top:420.8px;font-size:6.3px;color:#e0e0e0;">无</span>
<svg class="a" style="left:390.6px;top:424.2px;" width="5" height="4" viewBox="0 0 5 4"><path d="M0.6 0.8l1.9 1.9 1.9-1.9" fill="none" stroke="#bdbdbd" stroke-width="0.8"/></svg>
<span class="t" style="left:404px;top:420.8px;font-size:5.8px;color:#3b70bc;">0:00:00:00</span>
<span class="t" style="left:440px;top:420.8px;font-size:5.8px;color:#3b70bc;">0:00:03:29</span>
<span class="t" style="left:476px;top:420.8px;font-size:5.8px;color:#3b70bc;">0:00:04:00</span>
<span class="t" style="left:513px;top:420.8px;font-size:5.8px;color:#3b70bc;">100.0%</span>
<svg class="a" style="left:50px;top:434.4px;" width="5" height="5" viewBox="0 0 5 5"><path d="M0.6 0.4l3.4 2-3.4 2z" fill="#c8c8c8"/></svg>
<span class="t" style="left:60px;top:431.6px;font-size:6.3px;color:#d0d0d0;">内容</span>
<span class="t" style="left:227px;top:431.4px;font-size:6.3px;color:#c0c0c0;">添加:</span>
<svg class="a" style="left:243px;top:431.8px;" width="7" height="7" viewBox="0 0 7 7"><circle cx="3.4" cy="3.4" r="3.1" fill="#e0e0e0"/><path d="M2.5 1.8l2.5 1.6-2.5 1.6z" fill="#242125"/></svg>
<svg class="a" style="left:50px;top:444.8px;" width="5" height="5" viewBox="0 0 5 5"><path d="M0.6 0.4l3.4 2-3.4 2z" fill="#c8c8c8"/></svg>
<span class="t" style="left:60px;top:442px;font-size:6.3px;color:#d0d0d0;">变换</span>
<span class="t" style="left:184.3px;top:442.4px;font-size:6.2px;color:#3a7ae0;font-weight:bold">重置</span>
<div class="a" style="left:548px;top:394.6px;width:5px;height:160px;background:#1b191c;"></div>
<div class="a" style="left:554px;top:399.4px;width:434.8px;height:154.2px;background:#2f3336;"></div>
<div class="a" style="left:554px;top:430.4px;width:5px;height:123.2px;background:#2a2d30;"></div>
<div class="a" style="left:549.4px;top:399.4px;width:443px;height:10.8px;background:#1f1d20;"></div>
<div class="a" style="left:552px;top:395px;width:438px;height:4.3px;background:#747277;border-radius:2px"></div>
<div class="a" style="left:551.4px;top:394.8px;width:3px;height:4.7px;background:#3a7bd0;border-radius:1.4px"></div>
<div class="a" style="left:989.4px;top:394.8px;width:3px;height:4.7px;background:#3a7bd0;border-radius:1.4px"></div>
<div class="a" style="left:553px;top:410.1px;width:436.4px;height:6.5px;background:#6c6a6e;"></div>
<div class="a" style="left:551.2px;top:410.2px;width:2.8px;height:7.4px;background:#3a7bd0;border-radius:1px"></div>
<div class="a" style="left:989.2px;top:410.2px;width:2.8px;height:7.4px;background:#3a7bd0;border-radius:1px"></div>
<div class="a" style="left:553px;top:416.7px;width:436.4px;height:4.2px;background:#176029;"></div>
<div class="a" style="left:553px;top:418px;width:436.4px;height:1.7px;background:#209236;"></div>
<div class="a" style="left:553.6px;top:421.4px;width:435.6px;height:8.8px;background:#6a7cdc;"></div>
<div class="a" style="left:553.6px;top:421.4px;width:435.6px;height:1.8px;background:#8494e6;"></div>
<div class="a" style="left:554px;top:441.2px;width:434.8px;height:0.7px;background:#292c2f;"></div>
<div class="a" style="left:554px;top:451.7px;width:434.8px;height:0.7px;background:#292c2f;"></div>
<span class="t" style="left:579.2px;width:20px;text-align:center;top:399.2px;font-size:4.8px;color:#b8b8b8;">10f</span>
<div class="a" style="left:588.9px;top:407.8px;width:0.6px;height:2.2px;background:#707070;"></div>
<span class="t" style="left:615.4px;width:20px;text-align:center;top:399.2px;font-size:4.8px;color:#b8b8b8;">20f</span>
<div class="a" style="left:625.1px;top:407.8px;width:0.6px;height:2.2px;background:#707070;"></div>
<span class="t" style="left:651.6px;width:20px;text-align:center;top:399.2px;font-size:4.8px;color:#b8b8b8;">01:00f</span>
<div class="a" style="left:661.3px;top:407.8px;width:0.6px;height:2.2px;background:#707070;"></div>
<span class="t" style="left:687.8px;width:20px;text-align:center;top:399.2px;font-size:4.8px;color:#b8b8b8;">10f</span>
<div class="a" style="left:697.5px;top:407.8px;width:0.6px;height:2.2px;background:#707070;"></div>
<span class="t" style="left:724.0px;width:20px;text-align:center;top:399.2px;font-size:4.8px;color:#b8b8b8;">20f</span>
<div class="a" style="left:733.7px;top:407.8px;width:0.6px;height:2.2px;background:#707070;"></div>
<span class="t" style="left:760.2px;width:20px;text-align:center;top:399.2px;font-size:4.8px;color:#b8b8b8;">02:00f</span>
<div class="a" style="left:769.9px;top:407.8px;width:0.6px;height:2.2px;background:#707070;"></div>
<span class="t" style="left:796.4px;width:20px;text-align:center;top:399.2px;font-size:4.8px;color:#b8b8b8;">10f</span>
<div class="a" style="left:806.1px;top:407.8px;width:0.6px;height:2.2px;background:#707070;"></div>
<span class="t" style="left:832.6px;width:20px;text-align:center;top:399.2px;font-size:4.8px;color:#b8b8b8;">20f</span>
<div class="a" style="left:842.3px;top:407.8px;width:0.6px;height:2.2px;background:#707070;"></div>
<span class="t" style="left:868.8px;width:20px;text-align:center;top:399.2px;font-size:4.8px;color:#b8b8b8;">03:00f</span>
<div class="a" style="left:878.5px;top:407.8px;width:0.6px;height:2.2px;background:#707070;"></div>
<span class="t" style="left:905.0px;width:20px;text-align:center;top:399.2px;font-size:4.8px;color:#b8b8b8;">10f</span>
<div class="a" style="left:914.7px;top:407.8px;width:0.6px;height:2.2px;background:#707070;"></div>
<span class="t" style="left:941.2px;width:20px;text-align:center;top:399.2px;font-size:4.8px;color:#b8b8b8;">20f</span>
<div class="a" style="left:950.9px;top:407.8px;width:0.6px;height:2.2px;background:#707070;"></div>
<span class="t" style="left:980.6px;width:11.6px;overflow:hidden;top:399.2px;font-size:4.8px;color:#b8b8b8;">04:00f</span>
<span class="t" style="left:556.5px;top:399.2px;font-size:4.8px;color:#8a8a8a;">0f</span>
<div class="a" style="left:553px;top:400px;width:0.9px;height:154px;background:#3f7ac8;"></div>
<svg class="a" style="left:549.6px;top:399.8px;" width="8" height="8" viewBox="0 0 8 8"><path d="M0.4 0.4h7v3l-3.5 4-3.5-4z" fill="#3a86e0"/></svg>
<svg class="a" style="left:551.4px;top:432.20000000000005px;" width="4" height="7" viewBox="0 0 4 7"><path d="M0.6 0.5h2.6M0.6 6.4h2.6M1.9 0.5v6" stroke="#c8c8c8" stroke-width="0.8"/></svg>
<svg class="a" style="left:551.4px;top:442.6px;" width="4" height="7" viewBox="0 0 4 7"><path d="M0.6 0.5h2.6M0.6 6.4h2.6M1.9 0.5v6" stroke="#c8c8c8" stroke-width="0.8"/></svg>
<svg class="a" style="left:993.4px;top:411.6px;" width="7" height="8" viewBox="0 0 7 8"><path d="M0.4 0.4h6.2v4l-3.1 3-3.1-3z" fill="#e6e6e6"/></svg>
<svg class="a" style="left:993px;top:421px;" width="7" height="9" viewBox="0 0 7 9"><path d="M1 4.4a2.6 2.6 0 1 1 4 2.2" fill="none" stroke="#d0d0d0" stroke-width="0.9"/><path d="M2.4 7.6l3.4-0.4-1.8-2.2z" fill="#d0d0d0"/></svg>
<div class="a" style="left:-20px;top:554px;width:1040px;height:0.9px;background:#19171a;"></div>
<svg class="a" style="left:3.5px;top:555.5px;" width="8" height="7" viewBox="0 0 8 7"><path d="M1 1.4l2.4-1 3.6 3.6-1.4 2.8-2.6-0.6z" fill="#2a66b4"/><circle cx="3" cy="2.4" r="0.8" fill="#8ab4ea"/></svg>
<svg class="a" style="left:13.5px;top:555.5px;" width="8" height="7" viewBox="0 0 8 7"><rect x="0.6" y="0.6" width="3.6" height="3.6" fill="none" stroke="#2a66b4" stroke-width="1"/><circle cx="4.8" cy="4.2" r="2" fill="none" stroke="#3a82dc" stroke-width="1.1"/></svg>
<svg class="a" style="left:23px;top:555.5px;" width="7" height="7" viewBox="0 0 7 7"><path d="M1 0.6c-0.8 2-0.8 4 0 6M6 0.6c0.8 2 0.8 4 0 6" stroke="#2a66b4" stroke-width="0.9" fill="none"/><rect x="2.2" y="1" width="2.6" height="5" fill="#2f74cc"/></svg>
<svg class="a" style="left:552.5px;top:557px;" width="6" height="4" viewBox="0 0 6 4"><path d="M0.4 3.4l1.4-2 1 1.2 0.8-0.8 1.4 1.6z" fill="#bdbdbd"/></svg>
<svg class="a" style="left:562.5px;top:556px;" width="7" height="7" viewBox="0 0 7 7"><circle cx="3.4" cy="3.4" r="2.3" fill="#19171a" stroke="#d0d0d0" stroke-width="1"/></svg>
<div class="a" style="left:569px;top:559.2px;width:19.6px;height:0.6px;background:#4a484b;"></div>
<svg class="a" style="left:594px;top:555.6px;" width="10" height="6" viewBox="0 0 10 6"><path d="M0.4 5.4l2.6-4 1.6 2.4 1.4-2.4 3.2 4z" fill="#d0d0d0"/></svg>
<svg class="a" style="left:936px;top:527px;" width="16" height="10" viewBox="0 0 16 10"><path d="M1.6 7.6l5.2-5.6M13.4 1.6l-3 5.4" stroke="#3b3f42" stroke-width="0.7"/><path d="M5.6 8.2l2.2-1.8 2.2 1.8z" fill="#6a6e70"/></svg>
</div></div>
</body></html>
